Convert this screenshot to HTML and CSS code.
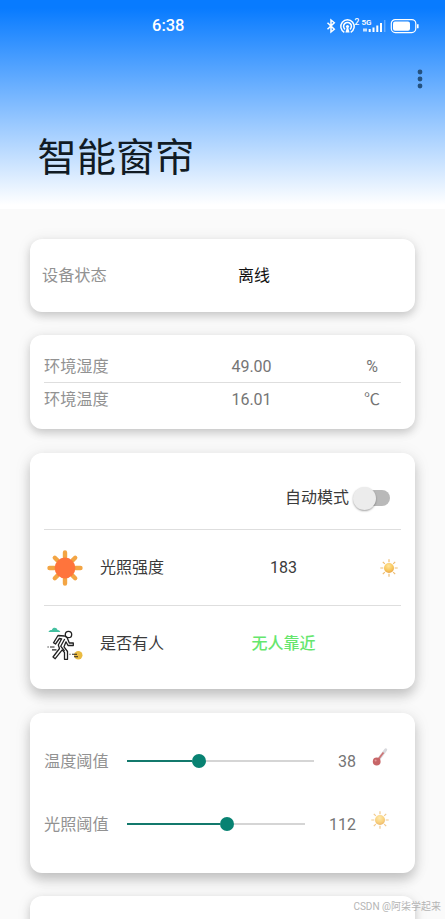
FILE: index.html
```html
<!DOCTYPE html>
<html lang="zh-CN">
<head>
<meta charset="utf-8">
<title>智能窗帘</title>
<link rel="stylesheet" href="styles.css">
</head>
<body>
<svg class="defs" width="0" height="0">
  <defs>
    <radialGradient id="sunFill" cx=".45" cy=".3" r=".75"><stop offset="0" stop-color="#ffe59a"/><stop offset=".6" stop-color="#f8c65c"/><stop offset="1" stop-color="#e5a045"/></radialGradient>
    <symbol id="sun" viewBox="0 0 18 18">
      <path d="M9 .3v3M9 14.700v3M.3 9h3M14.700 9h3M2.800 2.800l2 2M13.200 13.200l2 2M2.800 15.200l2-2M13.200 4.800l2-2" stroke="#eebd72" stroke-width="1.200"/>
      <circle cx="9" cy="9" r="5" fill="url(#sunFill)"/>
    </symbol>
  </defs>
</svg>
<div class="screen">
  <header class="header">
    <div class="status">
      <span class="time">6:38</span>
      <svg class="status-icons" width="94" height="18" viewBox="0 0 94 18" fill="none" stroke="#fff">
        <path d="M1.500 5.700L8.300 12.300l-3.300 2.700V3l3.300 2.700-6.800 6.600" stroke-width="1.500"/>
        <path d="M18.300 15.300a6.700 6.700 0 1 1 6.400 0M19 12.300a3.900 3.900 0 1 1 5 0" stroke-width="1.500"/>
        <circle cx="21.500" cy="9.500" r="1.600" fill="#fff" stroke="none"/>
        <path d="M20.700 11h1.600l1.300 4.500h-4.200z" fill="#fff" stroke="none"/>
        <text class="tiny" x="28.500" y="8">2</text>
        <text class="tiny network" x="35.500" y="8.300">5G</text>
        <path d="M37 13h4" stroke-width="3" opacity=".75"/>
        <path d="M43.700 15v-3M47.500 15v-4.500M51.300 15V8.500M55 15V6" stroke-width="2"/>
        <path d="M58.700 15V3" stroke-width="1.500" opacity=".3"/>
        <rect x="65.300" y="2.600" width="24.500" height="13" rx="4" stroke-width="1.200"/>
        <rect x="67" y="4.400" width="17" height="9.400" rx="2" fill="#fff" stroke="none"/>
        <path d="M91.800 7.200v4" stroke-width="1.600"/>
      </svg>
    </div>
    <div class="toolbar">
      <svg width="6" height="20" viewBox="0 0 6 20" fill="#24517f"><circle cx="3" cy="3" r="2.400"/><circle cx="3" cy="10" r="2.400"/><circle cx="3" cy="17" r="2.400"/></svg>
    </div>
    <h1 class="title">智能窗帘</h1>
  </header>
  <main class="cards">
    <section class="card device">
      <span class="label">设备状态</span>
      <span class="state">离线</span>
    </section>
    <section class="card climate">
      <div class="reading"><span class="label">环境湿度</span><span class="value">49.00</span><span class="unit">%</span></div>
      <div class="reading"><span class="label">环境温度</span><span class="value">16.01</span><span class="unit">℃</span></div>
    </section>
    <section class="card raised sensors">
      <div class="mode"><span>自动模式</span><span class="switch"><span class="knob"></span></span></div>
      <div class="sensor">
        <svg width="42" height="42" viewBox="0 0 42 42">
          <path d="M21 5.500v5M21 31.500v5M5.500 21h5M31.500 21h5M10.800 10.800l3 3M28.200 28.200l3 3M10.800 31.200l3-3M28.200 13.800l3-3" stroke="#f3a544" stroke-width="4.400" stroke-linecap="round"/>
          <circle cx="21" cy="21" r="10.400" fill="#ff743c"/>
        </svg>
        <span class="name">光照强度</span><span class="amount">183</span>
        <svg class="mark" width="18" height="18"><use href="#sun"/></svg>
      </div>
      <div class="sensor">
        <svg width="42" height="42" viewBox="0 0 42 42" fill="none" stroke-linejoin="round">
          <path d="M4.500 9c.5-1.700 2-2.200 3.300-2.100 1.200-3 5-2.500 5.700 0 1.600-.1 2.400 1 2.800 2.100z" fill="#43c0a0"/>
          <circle cx="34.300" cy="32.300" r="4.200" fill="#eabb42"/>
          <path d="M25.500 31.300h1M28 31.300h5M30 33.800h4" stroke="#29231f" stroke-width="1.100"/>
          <path d="M3.500 24h1.200M6 24h4.500M8 26.800h4.500" stroke="#222" stroke-width="1.200"/>
          <g stroke="#222" stroke-width="1.300">
            <circle cx="24.500" cy="11.500" r="3.200"/>
            <path d="M20.500 13l-6.500-.5-4.500 7.300 2 1.200 3.900-5.500 2.300.3-3.400 6.200 1.200 3.500-6.500 8.500 2.200 1.700 7-8.800 2.300 2.600v6.800h3V28.500l-3.500-4.700 2-5 2 3.700h5.300V20h-4l-2.400-6z"/>
            <path d="M20.700 16l-4 7.200 3.800 4.800"/>
          </g>
        </svg>
        <span class="name">是否有人</span><span class="amount clear">无人靠近</span>
      </div>
    </section>
    <section class="card raised limits">
      <div class="limit">
        <span class="label">温度阈值</span>
        <span class="slider warm"><span class="filled"></span><span class="thumb"></span><span class="rest"></span></span>
        <span class="setting">38</span>
        <svg class="mark" width="18" height="20" viewBox="0 0 18 20">
          <path d="M7.500 12.500L14.700 2.800" stroke="#d8d9dd" stroke-width="3" stroke-linecap="round"/>
          <path d="M6 14L12.500 5.500" stroke="#ce7475" stroke-width="1.700"/>
          <circle cx="5.700" cy="14.500" r="3.900" fill="#c76567"/><circle cx="4.600" cy="13.400" r="1" fill="#e29a9a"/>
        </svg>
      </div>
      <div class="limit">
        <span class="label">光照阈值</span>
        <span class="slider light"><span class="filled"></span><span class="thumb"></span><span class="rest"></span></span>
        <span class="setting">112</span>
        <svg class="mark faded" width="18" height="18"><use href="#sun"/></svg>
      </div>
    </section>
    <section class="card next"></section>
  </main>
  <div class="watermark">CSDN @阿柒学起来</div>
</div>
</body>
</html>
```

FILE: styles.css
```css
* { box-sizing: border-box; }
body {
  margin: 0;
  background: #fafafa;
  color: #3b3b3b;
  font: 16px/24px Roboto, "Noto Sans CJK SC", sans-serif;
}
.defs { position: absolute; }
.screen {
  position: relative;
  width: 445px;
  height: 919px;
  overflow: hidden;
  display: flex;
  flex-direction: column;
}
.header {
  flex: none;
  height: 209px;
  background: linear-gradient(#087bff 0, #087bff 8px, #fff 205px);
}
.status {
  height: 52px;
  padding: 0 25px 0 152px;
  display: flex;
  align-items: center;
  justify-content: space-between;
}
.time { color: #fff; font-size: 16.5px; font-weight: 500; }
.tiny { fill: #fff; stroke: none; font-size: 8.5px; font-weight: 500; }
.network { font-size: 8px; font-weight: 600; }
.toolbar {
  height: 54px;
  padding-right: 22.500px;
  display: flex;
  align-items: center;
  justify-content: flex-end;
}
.title {
  margin: 23px 0 0 37.500px;
  color: #111b24;
  font-size: 39.200px;
  font-weight: 400;
  line-height: 58px;
}
.cards {
  flex: none;
  padding: 30px 30px 0;
  display: flex;
  flex-direction: column;
}
.card {
  background: #fff;
  border-radius: 12px;
  box-shadow: 0 4px 9px rgba(0, 0, 0, .17), 0 1px 16px rgba(0, 0, 0, .07);
}
.raised { box-shadow: 0 7px 12px rgba(0, 0, 0, .19), 0 2px 18px rgba(0, 0, 0, .08); }
.label { color: #929292; font-size: 16.200px; white-space: nowrap; }
.device {
  height: 73px;
  margin-bottom: 23px;
  padding: 1px 0 0 12px;
  display: grid;
  grid-template-columns: 196px 1fr;
  align-items: center;
}
.state { color: #111; }
.climate { height: 94px; margin-bottom: 24px; padding: 16px 14px 0; }
.reading {
  height: 32px;
  padding-top: 1px;
  display: grid;
  grid-template-columns: 157px 101px 50px 40px;
  align-items: center;
}
.reading:first-child { border-bottom: 1px solid #dedede; }
.value, .unit { color: #757575; text-align: center; }
.unit { grid-column: 4; }
.sensors { height: 236px; margin-bottom: 24px; padding: 0 14px; }
.mode {
  height: 77px;
  padding: 14px 11px 0 0;
  border-bottom: 1px solid #dedede;
  display: flex;
  align-items: center;
  justify-content: flex-end;
  gap: 8px;
}
.switch {
  width: 33px;
  height: 16px;
  border-radius: 8px;
  background: #b9b9b9;
  display: flex;
  align-items: center;
}
.knob {
  flex: none;
  width: 23px;
  height: 23px;
  margin-left: -4px;
  border-radius: 50%;
  background: #ececec;
  box-shadow: 0 1px 2px rgba(0, 0, 0, .35);
}
.sensor {
  height: 75px;
  display: grid;
  grid-template-columns: 42px 14px 64px 69px 101px 46px 18px;
  align-items: center;
}
.sensor:nth-child(2) { height: 76px; border-bottom: 1px solid #dedede; }
.name { grid-column: 3; }
.amount { grid-column: 5; text-align: center; }
.clear { color: #66e66d; font-weight: 500; }
.sensor .mark { grid-column: 7; }
.limits { height: 160px; margin-bottom: 23px; padding: 17px 14px 0; }
.limit {
  height: 63px;
  display: grid;
  grid-template-columns: 64px 19px 187px 42px 15px 18px;
  align-items: center;
}
.slider { grid-column: 3; margin-bottom: 1px; display: flex; align-items: center; }
.filled { height: 2px; background: #13796c; }
.rest { flex: 1; height: 2px; background: #d5d5d5; }
.thumb { width: 14px; height: 14px; border-radius: 50%; background: #088272; }
.warm .filled { width: 65px; }
.light { width: 178px; }
.light .filled { width: 93px; }
.setting { grid-column: 4; color: #757575; text-align: right; }
.limit .mark { grid-column: 6; margin-bottom: 9px; }
.faded { opacity: .8; }
.next { height: 60px; }
.watermark {
  position: absolute;
  right: 4px;
  bottom: 4px;
  color: #b5b5b5;
  font-size: 10px;
  line-height: 16px;
}
```
